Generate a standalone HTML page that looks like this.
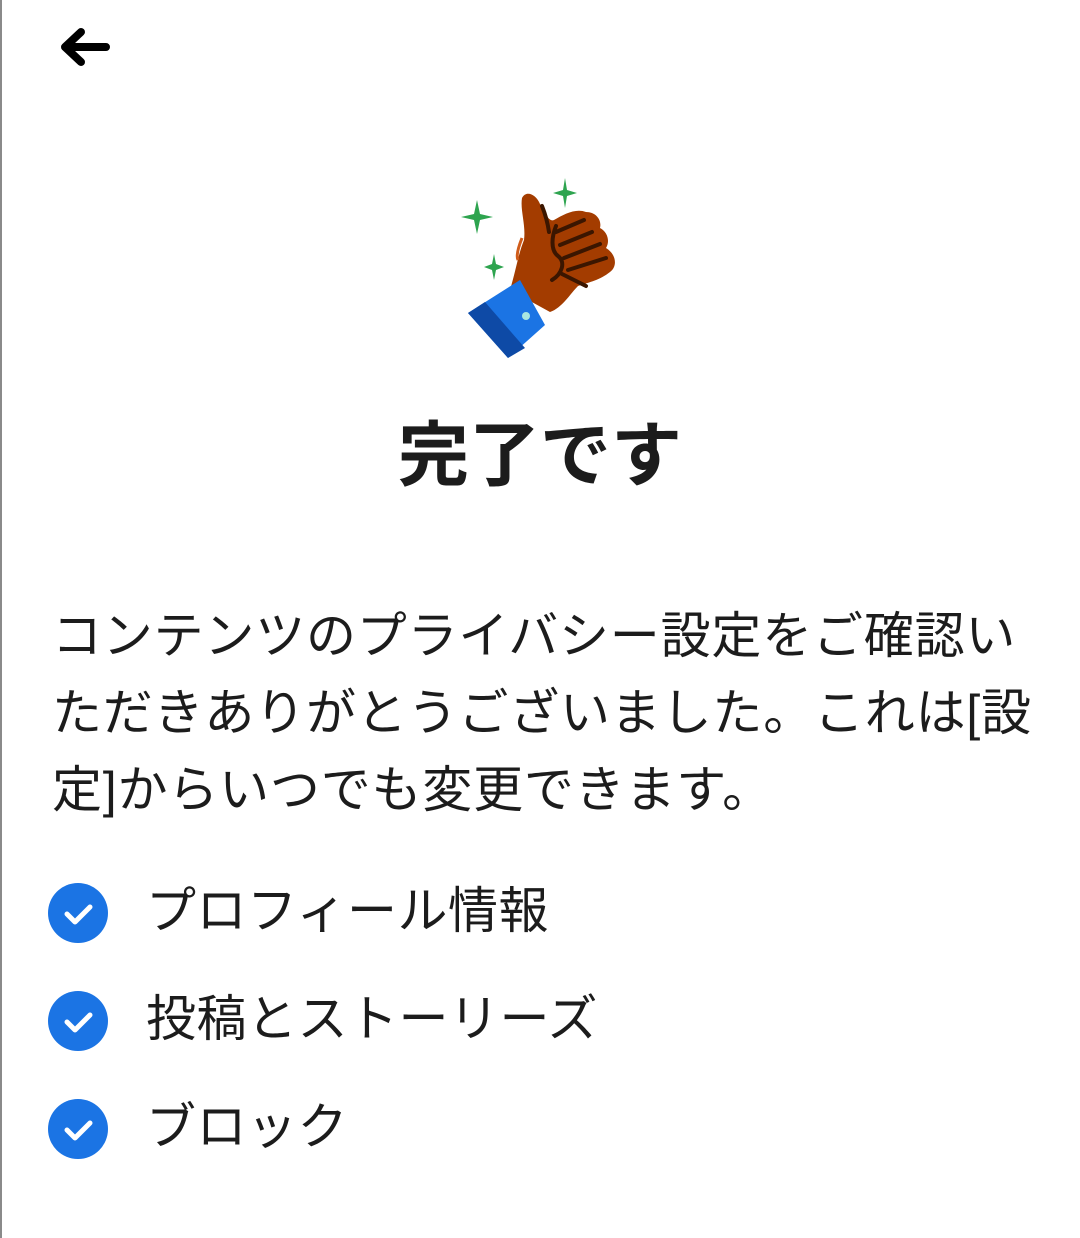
<!DOCTYPE html>
<html><head><meta charset="utf-8"><style>
html,body{margin:0;padding:0;background:#fff;}
body{width:1080px;height:1238px;position:relative;overflow:hidden;font-family:"Liberation Sans","Noto Sans CJK JP",sans-serif;color:#1c1c1c;}
.edge{position:absolute;left:0;top:0;width:2px;height:1238px;background:#8a8a8a;}
h1{position:absolute;left:0;width:1080px;top:412px;margin:0;text-align:center;font-size:71px;font-weight:700;line-height:90px;}
.p{position:absolute;left:52px;top:598px;width:1020px;font-size:50px;line-height:77px;white-space:nowrap;letter-spacing:0.8px;}
.item{position:absolute;left:48px;height:62px;}
.item svg{position:absolute;left:0;top:0;}
.item span{position:absolute;left:98px;top:-2px;font-size:50px;line-height:62px;white-space:nowrap;letter-spacing:0.5px;}
</style></head><body>
<div class="edge"></div>
<svg style="position:absolute;left:56px;top:26px" width="56" height="44" viewBox="0 0 56 44"><path d="M50 21H10M25 6L9 21L25 36" fill="none" stroke="#000" stroke-width="8" stroke-linecap="round" stroke-linejoin="round"/></svg>
<svg style="position:absolute;left:450px;top:170px" width="180" height="200" viewBox="0 0 180 200">
<path d="M27 30 L30 44 L43 47 L30 50 L27 64 L24 50 L11 47 L24 44Z" fill="#2ea44f"/>
<path d="M115 8 L117 20 L127 23 L117 26 L115 38 L113 26 L103 23 L113 20Z" fill="#2ea44f"/>
<path d="M44 84 L46 94 L54 97 L46 100 L44 110 L42 100 L34 97 L42 94Z" fill="#2ea44f"/>
<path d="M60 120 C66 100 68 85 74 70 C76 55 70 40 72 28 C76 20 86 24 90 34 C96 46 100 52 104 50 C114 44 126 38 136 42 C146 42 152 50 150 58 C158 62 160 72 156 78 C166 84 168 96 160 102 C150 110 140 112 128 116 C120 124 112 138 100 142 Z" fill="#a33c00"/>
<path d="M72 68 C68 78 66 86 68 90" stroke="#d05c1a" stroke-width="3" fill="none"/>
<path d="M92 36 C96 46 98 55 99 62 M106 56 C102 66 100 80 108 86 C116 92 112 104 102 110 M106 62 L134 50 M110 75 L142 62 M114 88 L150 74 M118 100 L156 88 M112 104 L136 116" stroke="#3b1600" stroke-width="4" fill="none" stroke-linecap="round"/>
<path d="M18 143 L70 110 L95 155 L58 188 Z" fill="#1b74e4"/>
<path d="M18 143 L35 132 L75 178 L58 188 Z" fill="#0e4aa6"/>
<circle cx="76" cy="146" r="4" fill="#a8e6e0"/>
</svg>
<h1>完了です</h1>
<div class="p">コンテンツのプライバシー設定をご確認い<br>ただきありがとうございました。これは[設<br>定]からいつでも変更できます。</div>
<div class="item" style="top:882px"><svg width="62" height="62"><circle cx="30" cy="31" r="30" fill="#1b74e4"/><path d="M19 32L27 40L42 25" fill="none" stroke="#fff" stroke-width="5" stroke-linecap="round" stroke-linejoin="round"/></svg><span>プロフィール情報</span></div>
<div class="item" style="top:990px"><svg width="62" height="62"><circle cx="30" cy="31" r="30" fill="#1b74e4"/><path d="M19 32L27 40L42 25" fill="none" stroke="#fff" stroke-width="5" stroke-linecap="round" stroke-linejoin="round"/></svg><span>投稿とストーリーズ</span></div>
<div class="item" style="top:1098px"><svg width="62" height="62"><circle cx="30" cy="31" r="30" fill="#1b74e4"/><path d="M19 32L27 40L42 25" fill="none" stroke="#fff" stroke-width="5" stroke-linecap="round" stroke-linejoin="round"/></svg><span>ブロック</span></div>
</body></html>
